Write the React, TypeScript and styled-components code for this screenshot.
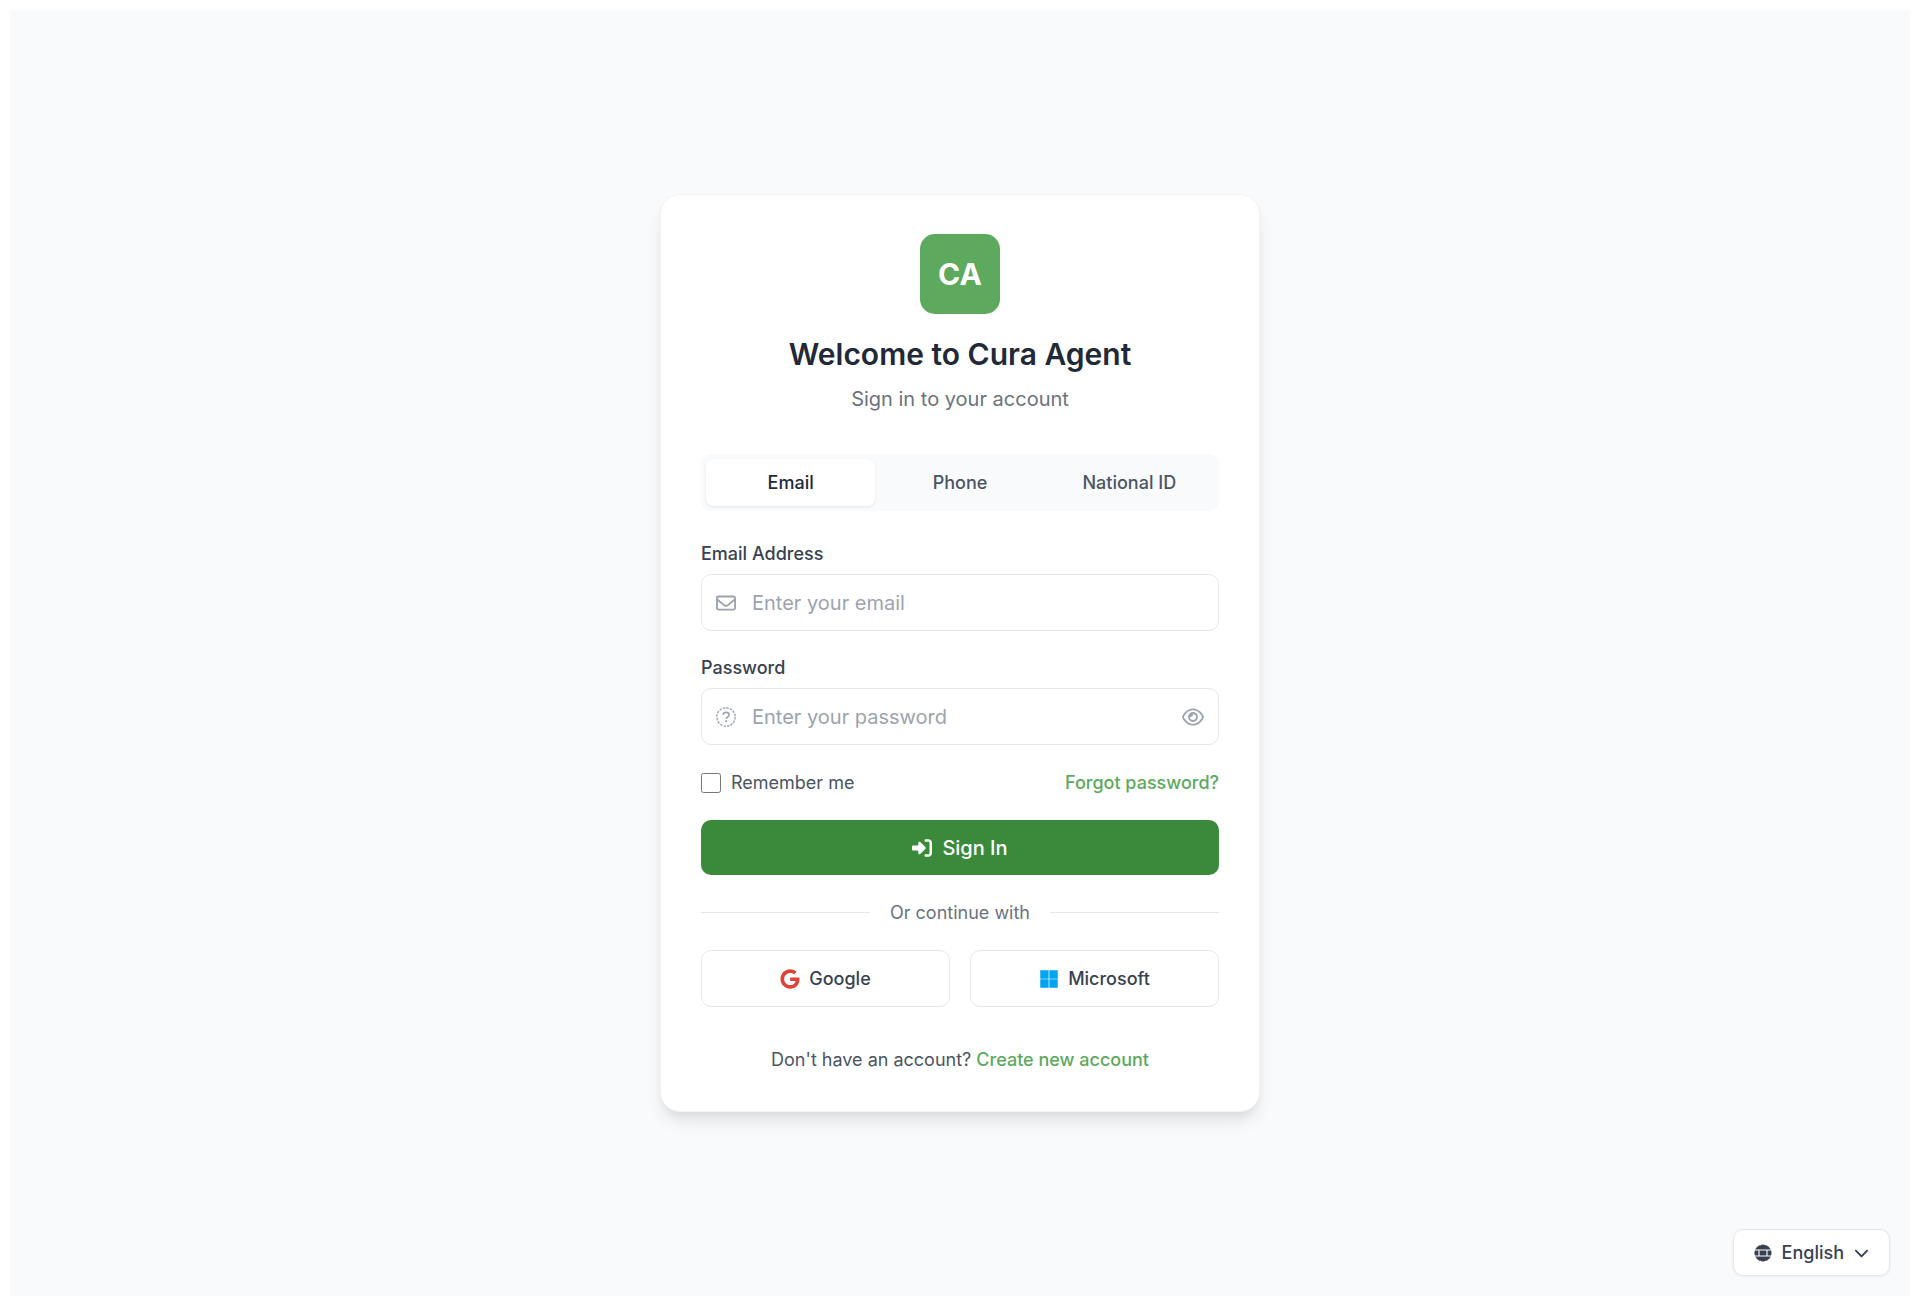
import React, { useState } from 'react';
import styled, { createGlobalStyle } from 'styled-components';
import {
  FaRegEnvelope,
  FaRegEye,
  FaRightToBracket,
  FaGoogle,
  FaMicrosoft,
  FaChevronDown,
} from 'react-icons/fa6';

const GlobalStyle = createGlobalStyle`
  *, *::before, *::after { box-sizing: border-box; }
  body {
    margin: 10px 10px 16px;
    background: #fff;
    font-family: Inter, "Liberation Sans", sans-serif;
    color: #374151;
  }
  button, input { font: inherit; }
`;

const Page = styled.div`
  position: relative;
  display: flex;
  align-items: center;
  justify-content: center;
  min-height: calc(100vh - 26px);
  padding: 20px;
  background: #f9fafc;
`;

const Card = styled.main`
  width: 100%;
  max-width: 600px;
  padding: 39px 40px;
  background: #fff;
  border: 1px solid #f3f4f6;
  border-radius: 20px;
  box-shadow: 0 12px 18px -4px rgba(0, 0, 0, 0.1), 0 5px 8px -2px rgba(0, 0, 0, 0.05);
`;

const Header = styled.header`
  display: flex;
  flex-direction: column;
  align-items: center;
  margin-bottom: 40px;
  text-align: center;
`;

const Logo = styled.div`
  display: flex;
  align-items: center;
  justify-content: center;
  width: 80px;
  height: 80px;
  margin-bottom: 20px;
  border-radius: 15px;
  background: #5da95d;
  color: #fff;
  font-size: 30px;
  font-weight: 700;
`;

const Title = styled.h1`
  margin: 0 0 10px;
  color: #1f2937;
  font-size: 30px;
  font-weight: 600;
  line-height: 40px;
`;

const Subtitle = styled.p`
  margin: 0;
  color: #6b7280;
  font-size: 20px;
  line-height: 30px;
`;

const Tabs = styled.div`
  display: grid;
  grid-template-columns: repeat(3, 1fr);
  margin-bottom: 30px;
  padding: 5px;
  border-radius: 10px;
  background: #f9fafc;
`;

const Tab = styled.button<{ $active: boolean }>`
  height: 47px;
  padding: 0;
  border: 0;
  border-radius: 8px;
  background: ${(p) => (p.$active ? '#fff' : 'transparent')};
  box-shadow: ${(p) => (p.$active ? '0 1px 3px rgba(0, 0, 0, 0.08)' : 'none')};
  color: ${(p) => (p.$active ? '#1f2937' : '#4b5563')};
  font-size: 18px;
  font-weight: 500;
  cursor: pointer;
`;

const Form = styled.form`
  display: flex;
  flex-direction: column;
  gap: 24px;
`;

const Field = styled.div`
  display: flex;
  flex-direction: column;
  gap: 8px;
`;

const Label = styled.label`
  color: #374151;
  font-size: 18px;
  font-weight: 500;
  line-height: 25px;
`;

const InputBox = styled.div`
  display: flex;
  align-items: center;
  height: 57px;
  padding: 0 14px;
  border: 1px solid #e5e7eb;
  border-radius: 10px;
  background: #fff;
  color: #9ca3af;
  font-size: 20px;

  svg { flex: none; }
`;

const Input = styled.input`
  flex: 1;
  min-width: 0;
  margin-left: 16px;
  padding: 0;
  border: 0;
  outline: 0;
  background: transparent;
  color: #1f2937;
  font-size: 20px;

  &::placeholder { color: #9ca3af; opacity: 1; }
`;

const IconButton = styled.button`
  display: flex;
  padding: 0;
  border: 0;
  background: transparent;
  color: #9ca3af;
  font-size: 22px;
  cursor: pointer;
`;

const Options = styled.div`
  display: flex;
  align-items: center;
  justify-content: space-between;
  font-size: 18px;
  line-height: 27px;
`;

const Remember = styled.label`
  display: flex;
  align-items: center;
  gap: 10px;
  color: #4b5563;
`;

const Checkbox = styled.input`
  width: 20px;
  height: 20px;
  margin: 0;
`;

const Link = styled.a`
  color: #5da95d;
  font-weight: 500;
  text-decoration: none;
`;

const Submit = styled.button`
  display: flex;
  align-items: center;
  justify-content: center;
  gap: 10px;
  height: 55px;
  border: 0;
  border-radius: 10px;
  background: #3b8a3b;
  color: #fff;
  font-size: 20px;
  font-weight: 500;
  cursor: pointer;
`;

const Divider = styled.div`
  display: flex;
  align-items: center;
  gap: 20px;
  margin: 25px 0;
  color: #6b7280;
  font-size: 18px;
  line-height: 25px;

  &::before, &::after {
    content: '';
    flex: 1;
    height: 1px;
    background: #e5e7eb;
  }
`;

const Providers = styled.div`
  display: grid;
  grid-template-columns: 1fr 1fr;
  gap: 20px;
  margin-bottom: 40px;
`;

const Provider = styled.button<{ $brand: string }>`
  display: flex;
  align-items: center;
  justify-content: center;
  gap: 9px;
  height: 57px;
  border: 1px solid #e5e7eb;
  border-radius: 10px;
  background: #fff;
  color: #374151;
  font-size: 18px;
  font-weight: 500;
  cursor: pointer;

  svg { color: ${(p) => p.$brand}; font-size: 20px; }
`;

const Footer = styled.p`
  margin: 0;
  color: #4b5563;
  font-size: 18px;
  line-height: 25px;
  text-align: center;
`;

const Language = styled.button`
  position: absolute;
  right: 20px;
  bottom: 20px;
  display: flex;
  align-items: center;
  gap: 10px;
  height: 47px;
  padding: 0 20px;
  border: 1px solid #e5e7eb;
  border-radius: 10px;
  background: #fff;
  box-shadow: 0 1px 3px rgba(0, 0, 0, 0.06);
  color: #374151;
  font-size: 18px;
  font-weight: 500;
  cursor: pointer;
`;

const DashedQuestion = () => (
  <svg width="20" height="20" viewBox="0 0 20 20" fill="none" stroke="currentColor" aria-hidden="true">
    <circle cx="10" cy="10" r="9.2" strokeWidth="1.4" strokeDasharray="2.5 1.112" />
    <path d="M6.9 7.9C7.3 6.2 8.4 5.4 10 5.4c1.900 0 3.100 1 3.100 2.500 0 2.100-2.900 2.200-2.900 4.200" strokeWidth="1.6" />
    <path d="M10.200 13.200v1.900" strokeWidth="1.900" />
  </svg>
);

const Globe = () => (
  <svg width="18" height="18" viewBox="0 0 18 18" aria-hidden="true">
    <circle cx="9" cy="9" r="8.600" fill="currentColor" />
    <g fill="none" stroke="#fff" strokeWidth="1.100">
      <path d="M0 6h18M0 12h18" />
      <path d="M5 6v6M13 6v6" />
      <path d="M6.500 0v1.200M11.500 0v1.200M6.500 16.800v1.200M11.500 16.800v1.200" />
    </g>
  </svg>
);

const TABS = ['Email', 'Phone', 'National ID'];

export default function App() {
  const [tab, setTab] = useState('Email');
  const [visible, setVisible] = useState(false);

  return (
    <>
      <GlobalStyle />
      <Page>
        <Card>
          <Header>
            <Logo>CA</Logo>
            <Title>Welcome to Cura Agent</Title>
            <Subtitle>Sign in to your account</Subtitle>
          </Header>
          <Tabs role="tablist">
            {TABS.map((name) => (
              <Tab
                key={name}
                type="button"
                role="tab"
                aria-selected={tab === name}
                $active={tab === name}
                onClick={() => setTab(name)}
              >
                {name}
              </Tab>
            ))}
          </Tabs>
          <Form onSubmit={(e) => e.preventDefault()}>
            <Field>
              <Label htmlFor="email">Email Address</Label>
              <InputBox>
                <FaRegEnvelope />
                <Input id="email" type="email" placeholder="Enter your email" />
              </InputBox>
            </Field>
            <Field>
              <Label htmlFor="password">Password</Label>
              <InputBox>
                <DashedQuestion />
                <Input
                  id="password"
                  type={visible ? 'text' : 'password'}
                  placeholder="Enter your password"
                />
                <IconButton type="button" aria-label="Show password" onClick={() => setVisible(!visible)}>
                  <FaRegEye />
                </IconButton>
              </InputBox>
            </Field>
            <Options>
              <Remember htmlFor="remember">
                <Checkbox id="remember" type="checkbox" />
                Remember me
              </Remember>
              <Link href="#forgot">Forgot password?</Link>
            </Options>
            <Submit type="submit">
              <FaRightToBracket />
              Sign In
            </Submit>
          </Form>
          <Divider>Or continue with</Divider>
          <Providers>
            <Provider type="button" $brand="#db4437">
              <FaGoogle />
              Google
            </Provider>
            <Provider type="button" $brand="#00a4ef">
              <FaMicrosoft />
              Microsoft
            </Provider>
          </Providers>
          <Footer>
            Don't have an account? <Link href="#register">Create new account</Link>
          </Footer>
        </Card>
        <Language type="button" aria-haspopup="listbox">
          <Globe />
          English
          <FaChevronDown size={15} />
        </Language>
      </Page>
    </>
  );
}
